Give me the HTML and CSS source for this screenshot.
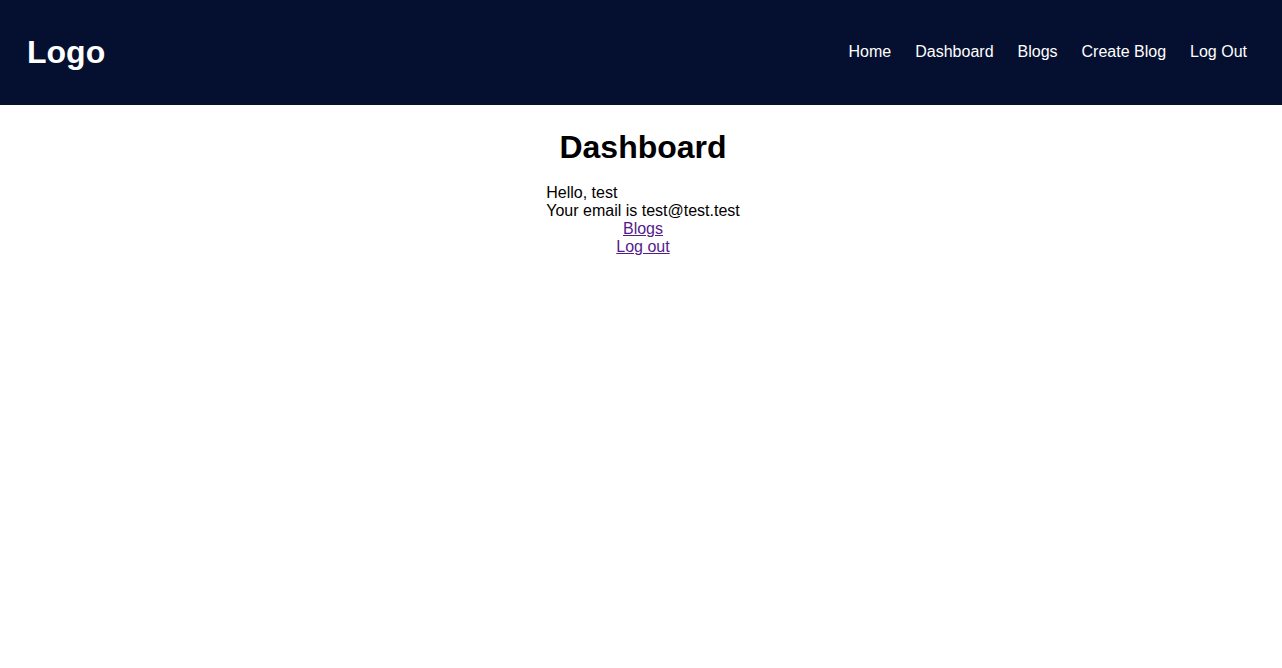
FILE: index.html
```html
<!DOCTYPE html>
<html>
<head>
<meta charset="utf-8">
<link rel="stylesheet" href="styles.css">
</head>
<body>
<header class="navbar">
  <div class="logo">Logo</div>
  <nav class="nav-links">
    <a href="#">Home</a>
    <a href="#">Dashboard</a>
    <a href="#">Blogs</a>
    <a href="#">Create Blog</a>
    <a href="#">Log Out</a>
  </nav>
</header>
<main class="dashboard">
  <h1>Dashboard</h1>
  <div class="info">
    <div>Hello, test</div>
    <div>Your email is test@test.test</div>
  </div>
  <a class="link" href="#">Blogs</a>
  <a class="link" href="#">Log out</a>
</main>
</body>
</html>
```

FILE: styles.css
```css
html, body {
  margin: 0;
  padding: 0;
  font-family: "Liberation Sans", Arial, sans-serif;
  font-size: 16px;
  background: #fff;
  color: #000;
}
.navbar {
  height: 105px;
  background: #050f2f;
  display: flex;
  align-items: center;
  justify-content: space-between;
  padding: 0 35px 0 27px;
  box-sizing: border-box;
}
.logo {
  color: #fff;
  font-weight: bold;
  font-size: 32px;
}
.nav-links {
  display: flex;
  gap: 24px;
  margin-top: -2px;
}
.nav-links a {
  color: #fff;
  text-decoration: none;
  font-size: 16px;
}
.dashboard {
  display: flex;
  flex-direction: column;
  align-items: center;
  padding-left: 4px;
}
.dashboard h1 {
  font-size: 32px;
  margin: 24px 0 18px;
}
.link {
  color: #551a8b;
}
```
